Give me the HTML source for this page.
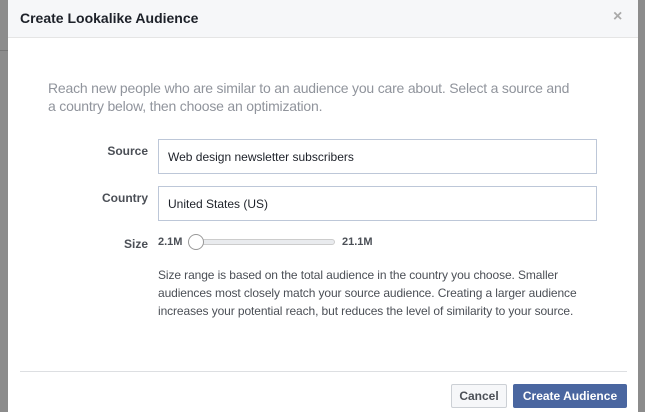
<!DOCTYPE html>
<html><head><style>
body{margin:0;width:645px;height:412px;overflow:hidden;background:#8c8c8c;font-family:"Liberation Sans",sans-serif;position:relative}
.bg1{position:absolute;left:0;top:50px;width:8px;height:1px;background:#777}
.dlg{position:absolute;left:8px;top:0;width:630px;height:412px;background:#fff}
.hdr{position:absolute;left:0;top:0;width:630px;height:37px;background:#f6f7f9;border-bottom:1px solid #e5e5e5}
.hdr .t{position:absolute;left:12px;top:10px;font-size:14px;font-weight:bold;color:#1d2129}
.x{position:absolute;left:605px;top:8px;font-size:16px;color:#aaa;font-weight:bold}
.intro{position:absolute;left:40px;top:79px;width:552px;font-size:14px;line-height:18px;color:#90949c;letter-spacing:-0.2px}
.lab{position:absolute;font-size:12px;font-weight:bold;color:#4b4f56;text-align:right;width:100px}
.inp{position:absolute;left:150px;width:439px;height:35px;border:1px solid #bdc7d8;font-size:12px;color:#1d2129;line-height:34px;box-sizing:border-box;padding-left:9px}
.sz{position:absolute;font-size:11px;font-weight:bold;color:#4b4f56}
.track{position:absolute;left:190px;top:239px;width:135px;height:4px;border:1px solid #ccc;border-radius:3px;background:#e9ebee}
.knob{position:absolute;left:180px;top:234px;width:14px;height:14px;border:1px solid #999;border-radius:50%;background:#fff}
.desc{position:absolute;left:150px;top:266px;width:450px;font-size:12px;line-height:18px;color:#4b4f56;letter-spacing:-0.1px}
.line{position:absolute;left:12px;top:371px;width:607px;height:1px;background:#dddfe2}
.btn{position:absolute;top:384px;height:24px;box-sizing:border-box;font-size:12px;font-weight:bold;line-height:22px;text-align:center;border-radius:2px}
</style></head><body>
<div class="bg1"></div>
<div class="dlg">
<div class="hdr"><div class="t">Create Lookalike Audience</div><div class="x">×</div></div>
<div class="intro">Reach new people who are similar to an audience you care about. Select a source and<br>a country below, then choose an optimization.</div>
<div class="lab" style="left:40px;top:144px">Source</div>
<div class="inp" style="top:139px">Web design newsletter subscribers</div>
<div class="lab" style="left:40px;top:191px">Country</div>
<div class="inp" style="top:186px">United States (US)</div>
<div class="lab" style="left:40px;top:237px">Size</div>
<div class="sz" style="left:150px;top:236px">2.1M</div>
<div class="track"></div><div class="knob"></div>
<div class="sz" style="left:334px;top:236px">21.1M</div>
<div class="desc">Size range is based on the total audience in the country you choose. Smaller audiences most closely match your source audience. Creating a larger audience increases your potential reach, but reduces the level of similarity to your source.</div>
<div class="line"></div>
<div class="btn" style="left:443px;width:56px;border:1px solid #ccd0d5;background:#f6f7f9;color:#4b4f56">Cancel</div>
<div class="btn" style="left:505px;width:114px;border:1px solid #4a66a0;background:#4a66a0;color:#fff">Create Audience</div>
</div>
</body></html>
